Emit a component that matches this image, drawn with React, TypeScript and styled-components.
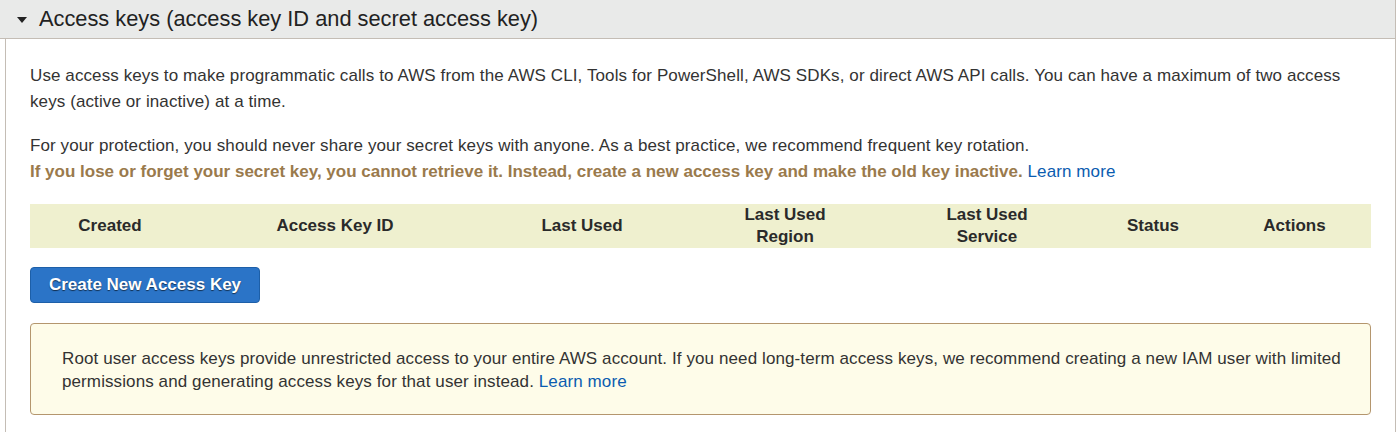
import React from "react";
import styled, { createGlobalStyle } from "styled-components";

const Global = createGlobalStyle`
  html, body { margin: 0; padding: 0; background: #ffffff; }
  body { font-family: "Liberation Sans", Arial, Helvetica, sans-serif; color: #333333; }
`;

const Panel = styled.section`
  width: 1396px;
  height: 432px;
  display: flex;
  flex-direction: column;
  overflow: hidden;
`;

const Header = styled.div`
  height: 39px;
  box-sizing: border-box;
  display: flex;
  align-items: center;
  gap: 12px;
  padding-left: 17px;
  background: #e9eae9;
  border-bottom: 1px solid #c4bdb5;
  border-right: 1px solid #c4bdb5;
`;

const Caret = styled.span`
  width: 0;
  height: 0;
  border-left: 5px solid transparent;
  border-right: 5px solid transparent;
  border-top: 6px solid #222;
  margin-top: 1px;
`;

const Title = styled.h2`
  margin: 0;
  font-size: 21.8px;
  font-weight: 400;
  color: #222;
  line-height: 24px;
`;

const Body = styled.div`
  flex: 1;
  margin-left: 5px;
  border-left: 1px solid #c4bdb5;
  border-right: 1px solid #c4bdb5;
  padding: 24px 24px 0 24px;
  display: flex;
  flex-direction: column;
`;

const Para = styled.p<{ $gap?: number }>`
  margin: 0 0 ${(p) => p.$gap ?? 0}px 0;
  font-size: 17px;
  letter-spacing: 0.1px;
  line-height: 26px;
  color: #333;
`;

const Warn = styled.strong`
  color: #9a7a4c;
  font-weight: 700;
  letter-spacing: 0;
`;

const Link = styled.a`
  color: #0b5cb0;
  text-decoration: none;
  font-weight: 400;
`;

const TableHead = styled.div`
  margin-top: 19px;
  display: grid;
  grid-template-columns: 160px 290px 204px 202px 202px 130px 1fr;
  min-height: 43px;
  background: #eff0cf;
`;

const Th = styled.div`
  display: flex;
  align-items: center;
  justify-content: center;
  text-align: center;
  font-weight: 700;
  font-size: 17px;
  line-height: 22px;
  color: #2a2a2a;
`;

const Button = styled.button`
  align-self: flex-start;
  margin-top: 19px;
  width: 230px;
  height: 36px;
  border: 1px solid #1d5fa8;
  border-radius: 4px;
  background: #2b74c7;
  color: #ffffff;
  font-family: inherit;
  font-weight: 700;
  font-size: 17px;
  text-shadow: 0 1px 1px rgba(0, 0, 0, 0.6);
  cursor: pointer;
`;

const Notice = styled.div`
  margin-top: 20px;
  box-sizing: border-box;
  height: 92px;
  border: 1px solid #b4966e;
  border-radius: 4px;
  background: #fefce9;
  padding: 23px 16px 0 31px;
  font-size: 17px;
  letter-spacing: 0.1px;
  line-height: 23px;
  color: #333;
`;

const columns = [
  "Created",
  "Access Key ID",
  "Last Used",
  ["Last Used", "Region"],
  ["Last Used", "Service"],
  "Status",
  "Actions",
];

export default function App() {
  return (
    <>
      <Global />
      <Panel>
        <Header>
          <Caret />
          <Title>Access keys (access key ID and secret access key)</Title>
        </Header>
        <Body>
          <Para $gap={18}>
            Use access keys to make programmatic calls to AWS from the AWS CLI, Tools for PowerShell, AWS SDKs, or
            direct AWS API calls. You can have a maximum of two access keys (active or inactive) at a time.
          </Para>
          <Para>
            For your protection, you should never share your secret keys with anyone. As a best practice, we recommend
            frequent key rotation.
          </Para>
          <Para>
            <Warn>
              If you lose or forget your secret key, you cannot retrieve it. Instead, create a new access key and make
              the old key inactive.
            </Warn>{" "}
            <Link href="#">Learn more</Link>
          </Para>
          <TableHead>
            {columns.map((c, i) => (
              <Th key={i}>
                {Array.isArray(c) ? (
                  <span>
                    {c[0]}
                    <br />
                    {c[1]}
                  </span>
                ) : (
                  c
                )}
              </Th>
            ))}
          </TableHead>
          <Button>Create New Access Key</Button>
          <Notice>
            Root user access keys provide unrestricted access to your entire AWS account. If you need long-term access
            keys, we recommend creating a new IAM user with limited permissions and generating access keys for that
            user instead. <Link href="#">Learn more</Link>
          </Notice>
        </Body>
      </Panel>
    </>
  );
}
